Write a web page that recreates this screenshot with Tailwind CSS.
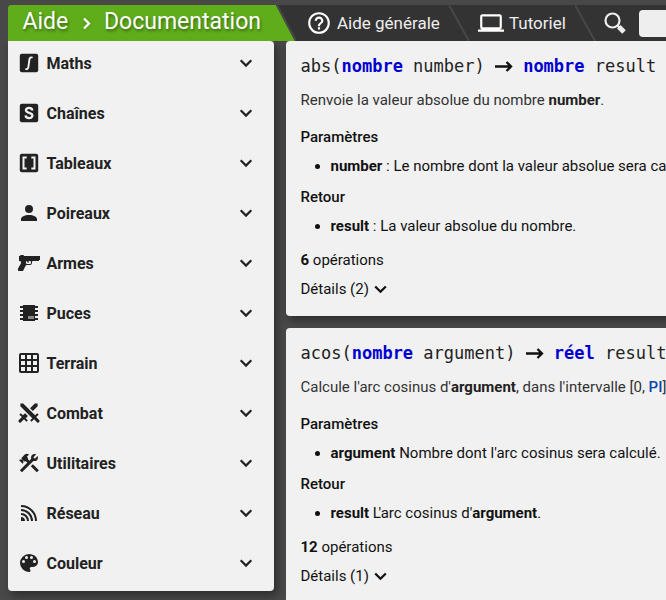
<!DOCTYPE html>
<html lang="fr">
<head>
<meta charset="utf-8">
<title>Documentation</title>
<script src="https://cdn.jsdelivr.net/npm/@tailwindcss/browser@4"></script>
</head>
<body class="h-[600px] w-[666px] overflow-hidden bg-[#484848] font-['Roboto',sans-serif] text-[#222]">
<header class="ml-2 mt-[5px] flex h-9 w-[658px] overflow-hidden rounded-tl-[3px] bg-[#333] text-[#eee]">
  <div class="flex h-9 w-[268px] shrink-0 items-center bg-[#5fad1b] pl-[14.500px] pb-[2px] text-[23px] text-white [text-shadow:1px_2px_3px_rgba(0,0,0,.4)]">
    <span class="w-[54px]">Aide</span>
    <svg class="mr-[10.500px] mt-[2px] w-[17px] drop-shadow-sm" height="24" viewBox="0 0 17 24" fill="none" stroke="white" stroke-width="2.200"><path d="M7 7.500l5 5-5 5"/></svg>
    <span>Documentation</span>
  </div>
  <svg class="shrink-0" width="21" height="36"><path fill="#5fad1b" d="M0 0L19 36H0z"/><path stroke="#484848" stroke-width="2" d="M1 0L20 36"/></svg>
  <div class="flex w-[152px] shrink-0 items-center pl-[9px]">
    <svg width="26" height="26" viewBox="0 0 24 24" fill="white"><path d="M11,18H13V16H11V18M12,2A10,10 0 0,0 2,12A10,10 0 0,0 12,22A10,10 0 0,0 22,12A10,10 0 0,0 12,2M12,20C7.59,20 4,16.41 4,12C4,7.59 7.59,4 12,4C16.41,4 20,7.59 20,12C20,16.41 16.41,20 12,20M12,6A4,4 0 0,0 8,10H10A2,2 0 0,1 12,8A2,2 0 0,1 14,10C14,12 11,11.75 11,15H13C13,12.75 16,12.5 16,10A4,4 0 0,0 12,6Z"/></svg>
    <span class="ml-[5px] mt-px whitespace-nowrap text-[17px]">Aide générale</span>
  </div>
  <svg class="shrink-0" width="21" height="36"><path stroke="#484848" stroke-width="2" d="M0 0L20 36"/></svg>
  <div class="flex w-[105px] shrink-0 items-center pl-2">
    <svg width="26" height="26" viewBox="0 0 24 24" fill="white"><path d="M4,6H20V16H4M20,18A2,2 0 0,0 22,16V6C22,4.89 21.1,4 20,4H4C2.89,4 2,4.89 2,6V16A2,2 0 0,0 4,18H0V20H24V18H20Z"/></svg>
    <span class="ml-[5px] mt-px text-[17px]">Tutoriel</span>
  </div>
  <svg class="shrink-0" width="21" height="36"><path stroke="#484848" stroke-width="2" d="M0 0L20 36"/></svg>
  <div class="flex grow items-center">
    <svg class="ml-2 shrink-0" width="22" height="22" viewBox="0 0 22 22" fill="none" stroke="#eee"><circle cx="8.500" cy="8.500" r="7" stroke-width="2.200"/><path stroke-width="2.200" d="M13 13l3 3"/><path stroke-width="5" d="M14.800 14.800l5.200 5.200"/></svg>
    <div class="ml-[13px] h-[27px] grow rounded-l-[4px] bg-[#eee]"></div>
  </div>
</header>
<div class="flex w-[666px] items-start gap-3 overflow-hidden pl-2">
  <nav class="h-[550px] w-[266px] shrink-0 rounded-b-[4px] rounded-tr-[4px] bg-[#f1f1f1] pl-[9px] pr-4 text-[16px] font-bold shadow-[3px_4px_8px_rgba(0,0,0,.4)]" id="nav"></nav>
  <main class="flex shrink-0 flex-col gap-3 text-[15px] leading-[20px] text-[#111]">
    <section class="h-[275px] w-[500px] rounded-[4px] bg-[#f1f1f1] px-[14.500px] pt-[14px] whitespace-nowrap shadow-[3px_4px_8px_rgba(0,0,0,.4)]">
      <h2 class="flex h-[22px] items-center whitespace-pre font-['DejaVu_Sans_Mono',monospace] text-[17px] text-[#222]">abs(<b class="text-[#0000d0]">nombre</b> number)<svg class="mx-[10.200px]" width="18" height="14" viewBox="0 0 18 14" fill="none" stroke="#111" stroke-width="2.300"><path d="M0 7.500h16M11.500 3l4.500 4.500-4.500 4.500"/></svg><b class="text-[#0000d0]">nombre</b> result</h2>
      <p class="mt-[13px] text-[#333]">Renvoie la valeur absolue du nombre <b class="text-[#222]">number</b>.</p>
      <h4 class="mt-[17px] font-medium">Paramètres</h4>
      <ul class="mt-[9px] list-disc pl-[30px]"><li><b>number</b> : Le nombre dont la valeur absolue sera calculée.</li></ul>
      <h4 class="mt-[11px] font-medium">Retour</h4>
      <ul class="mt-[9px] list-disc pl-[30px]"><li><b>result</b> : La valeur absolue du nombre.</li></ul>
      <p class="mt-[14px]"><b>6</b> opérations</p>
      <div class="mt-[9px] flex items-center">Détails (2)<svg class="ml-[5px]" width="13" height="12" viewBox="0 0 13 12" fill="none" stroke="#111" stroke-width="2.300"><path d="M1.200 3.500l5.300 5.200 5.300-5.200"/></svg></div>
    </section>
    <section class="h-[300px] w-[500px] rounded-[4px] bg-[#f1f1f1] px-[14.500px] pt-[14px] whitespace-nowrap">
      <h2 class="flex h-[22px] items-center whitespace-pre font-['DejaVu_Sans_Mono',monospace] text-[17px] text-[#222]">acos(<b class="text-[#0000d0]">nombre</b> argument)<svg class="mx-[10.200px]" width="18" height="14" viewBox="0 0 18 14" fill="none" stroke="#111" stroke-width="2.300"><path d="M0 7.500h16M11.500 3l4.500 4.500-4.500 4.500"/></svg><b class="text-[#0000d0]">réel</b> result</h2>
      <p class="mt-[13px] text-[#333]">Calcule l'arc cosinus d'<b class="text-[#222]">argument</b>, dans l'intervalle [0, <span class="font-medium text-[#0645ad]">PI</span>].</p>
      <h4 class="mt-[17px] font-medium">Paramètres</h4>
      <ul class="mt-[9px] list-disc pl-[30px]"><li><b>argument</b> Nombre dont l'arc cosinus sera calculé.</li></ul>
      <h4 class="mt-[11px] font-medium">Retour</h4>
      <ul class="mt-[9px] list-disc pl-[30px]"><li><b>result</b> <span class="tracking-[-2.500px]">L</span>'arc cosinus d'<b>argument</b>.</li></ul>
      <p class="mt-[14px]"><b>12</b> opérations</p>
      <div class="mt-[9px] flex items-center">Détails (1)<svg class="ml-[5px]" width="13" height="12" viewBox="0 0 13 12" fill="none" stroke="#111" stroke-width="2.300"><path d="M1.200 3.500l5.300 5.200 5.300-5.200"/></svg></div>
    </section>
  </main>
</div>
<script>
const box = '<rect x="2.800" y="2.800" width="18.400" height="18.400" rx="2"/>';
const items = [
 ['Maths', box + '<path fill="none" stroke="#f1f1f1" stroke-width="1.900" d="M8.400 17.800c2 .8 2.700-.2 3-2l1-7.300c.3-1.900 1.300-2.600 3.200-1.800"/>'],
 ['Chaînes', box + '<path fill="none" stroke="#f1f1f1" stroke-width="2.300" d="M15.300 9.500C15 6 8.900 6 8.900 9.300c0 3.100 6.500 2.200 6.500 5.300 0 3.400-6.600 3.400-6.800-.2"/>'],
 ['Tableaux', box + '<path fill="none" stroke="#f1f1f1" stroke-width="2" d="M9.700 6.500h-3.200v11h3.200M14.300 6.500h3.200v11h-3.200"/>'],
 ['Poireaux', '<path d="M12,4A4,4 0 0,1 16,8A4,4 0 0,1 12,12A4,4 0 0,1 8,8A4,4 0 0,1 12,4M12,14C16.42,14 20,15.79 20,18V20H4V18C4,15.79 7.58,14 12,14Z"/>'],
 ['Armes', '<path d="M7,5H23V9H22V10H16A1,1 0 0,0 15,11V12A2,2 0 0,1 13,14H9.62C9.24,14 8.89,14.22 8.72,14.56L6.27,19.45C6.1,19.79 5.76,20 5.38,20H2C2,20 -1,20 3,14C3,14 6,10 2,10V5H3L3.5,4H6.5L7,5M14,12V11A1,1 0 0,0 13,10H12C12,10 11,11 12,12A2,2 0 0,1 10,10A1,1 0 0,0 9,11V12A1,1 0 0,0 10,13H13A1,1 0 0,0 14,12Z"/>'],
 ['Puces', '<path d="M6 4h12v16H6z"/><path fill="none" stroke="#222" stroke-width="2" d="M3 6h18M3 10h18M3 14h18M3 18h18"/><path fill="#888" d="M11 15h6v3h-6z"/>'],
 ['Terrain', '<path d="M10,4V8H14V4H10M16,4V8H20V4H16M16,10V14H20V10H16M16,16V20H20V16H16M14,20V16H10V20H14M8,20V16H4V20H8M8,14V10H4V14H8M8,8V4H4V8H8M10,14H14V10H10V14M4,2H20A2,2 0 0,1 22,4V20A2,2 0 0,1 20,22H4C2.920,22 2,21.1 2,20V4A2,2 0 0,1 4,2Z" fill-rule="evenodd"/>'],
 ['Combat', '<path d="M6.2,2.44L18.1,14.34L20.22,12.22L21.63,13.63L19.16,16.1L22.34,19.28C22.73,19.67 22.73,20.3 22.34,20.69L21.63,21.4C21.24,21.79 20.61,21.79 20.22,21.4L17,18.23L14.56,20.7L13.15,19.29L15.27,17.17L3.37,5.27V2.44H6.2M15.89,10L20.63,5.26V2.44H17.8L13.06,7.18L15.89,10M10.94,15L8.11,12.13L5.9,14.34L3.78,12.22L2.37,13.63L4.84,16.1L1.66,19.29C1.27,19.68 1.27,20.31 1.66,20.7L2.37,21.41C2.76,21.8 3.39,21.8 3.78,21.41L7,18.23L9.44,20.7L10.85,19.29L8.73,17.17L10.94,15Z"/>'],
 ['Utilitaires', '<path d="M13.78 15.3L19.78 21.3L21.89 19.14L15.89 13.14L13.78 15.3M17.5 10.1C17.11 10.1 16.69 10.05 16.36 9.91L4.97 21.25L2.86 19.14L10.27 11.74L8.5 9.96L7.78 10.66L6.33 9.25V12.11L5.63 12.81L2.11 9.25L2.81 8.55H5.62L4.22 7.14L7.78 3.58C8.95 2.41 10.83 2.41 12 3.58L9.89 5.74L11.3 7.14L10.59 7.85L12.38 9.63L14.2 7.75C14.06 7.42 14 7 14 6.63C14 4.66 15.56 3.11 17.5 3.11C18.09 3.11 18.61 3.25 19.08 3.53L16.41 6.2L17.91 7.7L20.58 5.03C20.86 5.5 21 6 21 6.63C21 8.55 19.45 10.1 17.5 10.1Z"/>'],
 ['Réseau', '<path d="M4,6V4H4.1C12.9,4 20,11.1 20,19.9V20H18V19.9C18,12.2 11.8,6 4,6M4,10V8A12,12 0 0,1 16,20H14A10,10 0 0,0 4,10M4,14V12A8,8 0 0,1 12,20H10A6,6 0 0,0 4,14M4,16A4,4 0 0,1 8,20H4V16Z"/>'],
 ['Couleur', '<path d="M17.5,12A1.5,1.5 0 0,1 16,10.5A1.5,1.5 0 0,1 17.5,9A1.5,1.5 0 0,1 19,10.5A1.5,1.5 0 0,1 17.5,12M14.5,8A1.5,1.5 0 0,1 13,6.5A1.5,1.5 0 0,1 14.5,5A1.5,1.5 0 0,1 16,6.5A1.5,1.5 0 0,1 14.5,8M9.5,8A1.5,1.5 0 0,1 8,6.5A1.5,1.5 0 0,1 9.5,5A1.5,1.5 0 0,1 11,6.5A1.5,1.5 0 0,1 9.5,8M6.5,12A1.5,1.5 0 0,1 5,10.5A1.5,1.5 0 0,1 6.5,9A1.5,1.5 0 0,1 8,10.5A1.5,1.5 0 0,1 6.5,12M12,3A9,9 0 0,0 3,12A9,9 0 0,0 12,21A1.5,1.5 0 0,0 13.500,19.5C13.5,19.11 13.35,18.76 13.11,18.5C12.88,18.23 12.73,17.88 12.73,17.5A1.5,1.5 0 0,1 14.23,16H16A5,5 0 0,0 21,11C21,6.580 16.97,3 12,3Z"/>']
];
document.getElementById('nav').innerHTML = items.map(([name, icon]) => `<div class="flex h-[50px] items-start"><div class="flex h-11 w-full items-center"><svg class="shrink-0" width="24" height="24" viewBox="0 0 24 24" fill="#222">${icon}</svg><span class="ml-[5.500px] mt-[2px] flex-1">${name}</span><svg width="24" height="24" viewBox="0 0 24 24" fill="none" stroke="#222" stroke-width="2.200"><path d="M6.700 9.300l5.300 5.300 5.300-5.300"/></svg></div></div>`).join('');
</script>
</body>
</html>
